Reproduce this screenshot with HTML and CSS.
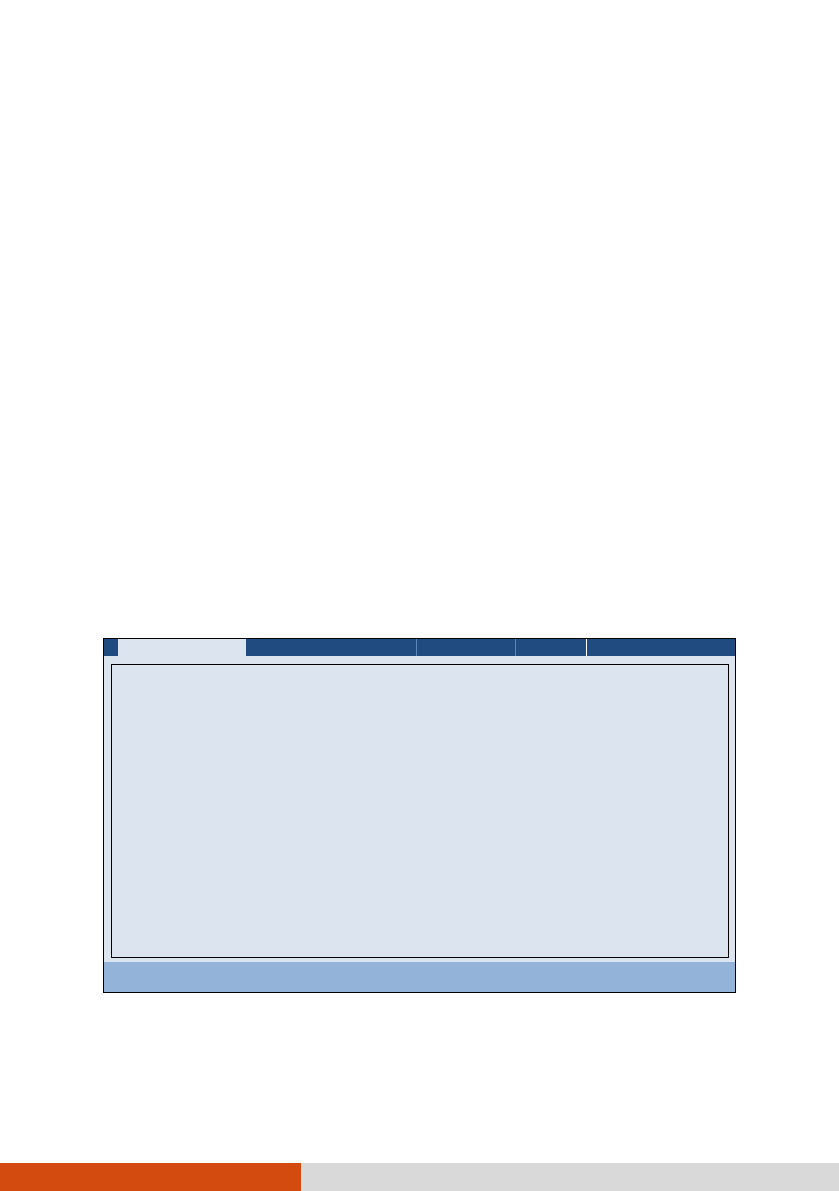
FILE: index.html
```html
<!DOCTYPE html>
<html>
<head>
<meta charset="utf-8">
<link rel="stylesheet" href="styles.css">
</head>
<body>
<div class="page">
  <div class="frame">
    <div class="tabs">
      <div class="tab dark t0"></div>
      <div class="tab light t1"></div>
      <div class="tab dark t2"></div>
      <div class="sep"></div>
      <div class="tab dark t3"></div>
      <div class="sep"></div>
      <div class="tab dark t4"></div>
      <div class="sep white"></div>
      <div class="tab dark t5"></div>
    </div>
    <div class="body">
      <div class="inner"></div>
    </div>
    <div class="status"></div>
  </div>
</div>
<div class="footer">
  <div class="orange"></div>
  <div class="grey"></div>
</div>
</body>
</html>
```
FILE: styles.css
```css
html, body {
  margin: 0;
  padding: 0;
  background: #ffffff;
  font-family: "Liberation Sans", Arial, sans-serif;
}
body {
  width: 839px;
  height: 1191px;
  display: flex;
  flex-direction: column;
  overflow: hidden;
}
.page {
  flex: 1;
  padding-top: 638px;
  padding-left: 103px;
}
.frame {
  width: 631px;
  border: 1px solid #000;
  display: flex;
  flex-direction: column;
  background: #dce4ef;
}
.tabs {
  display: flex;
  height: 17px;
  background: #1f4b80;
}
.tab { height: 17px; }
.dark { background: #1f4b80; }
.light { background: #dce4ef; }
.t0 { width: 14px; }
.t1 { width: 128px; }
.t2 { width: 170px; }
.t3 { width: 98px; }
.t4 { width: 70px; }
.t5 { flex: 1; }
.sep { width: 1px; background: #5b86bb; }
.sep.white { background: #ffffff; }
.body {
  padding: 8px 6px 4px 7px;
}
.inner {
  height: 292px;
  border: 1px solid #000;
  background: #dce4ef;
}
.status {
  height: 30px;
  background: #94b3d8;
}
.footer {
  height: 28px;
  display: flex;
}
.orange {
  width: 301px;
  background: #d44b10;
}
.grey {
  flex: 1;
  background: #d9d9d9;
}
```
